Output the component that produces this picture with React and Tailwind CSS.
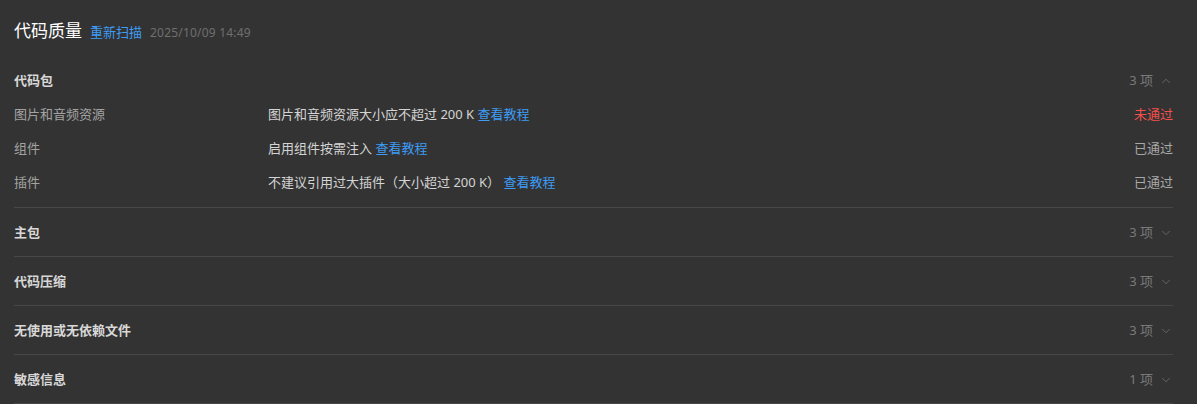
import React from "react";
import { ChevronUp, ChevronDown } from "lucide-react";

const font = { fontFamily: '"Noto Sans", "Noto Sans CJK SC", sans-serif' };

const rows = [
  { name: "图片和音频资源", desc: "图片和音频资源大小应不超过 200 K", status: "未通过", fail: true },
  { name: "组件", desc: "启用组件按需注入", status: "已通过" },
  { name: "插件", desc: "不建议引用过大插件（大小超过 200 K）", status: "已通过" },
];

const sections = [
  { title: "主包", count: "3 项" },
  { title: "代码压缩", count: "3 项" },
  { title: "无使用或无依赖文件", count: "3 项" },
  { title: "敏感信息", count: "1 项" },
];

function Count({ count, open }) {
  return (
    <div className="flex items-center gap-[6px] text-[13px] text-[#7a7a7a]">
      <span>{count}</span>
      {open ? (
        <ChevronUp size={14} strokeWidth={1.2} className="text-[#7a7a7a]" />
      ) : (
        <ChevronDown size={14} strokeWidth={1.2} className="text-[#7a7a7a]" />
      )}
    </div>
  );
}

export default function App() {
  return (
    <div className="w-[1197px] h-[404px] overflow-hidden bg-[#333333] pl-[14px] pr-[24px]" style={font}>
      <div className="h-[57px] pt-[19px] flex items-start">
        <div className="flex items-baseline">
          <span className="text-[17px] leading-[24px] text-white">代码质量</span>
          <span className="ml-[8px] text-[13px] text-[#3d9cf5]">重新扫描</span>
          <span className="ml-[8px] text-[12px] tracking-[0.2px] text-[#6f6f6f]">2025/10/09 14:49</span>
        </div>
      </div>

      <div className="border-b border-[#474747] pb-[1px]">
        <div className="h-[47px] flex items-center justify-between">
          <span className="text-[13px] font-bold text-[#d8d8d8]">代码包</span>
          <Count count="3 项" open />
        </div>
        {rows.map((r) => (
          <div key={r.name} className="h-[34px] flex items-start text-[13px] leading-[20px]">
            <div className="w-[254px] text-[#a3a3a3]">{r.name}</div>
            <div className="flex-1 text-[#d4d4d4]">
              {r.desc} <span className="text-[#3d9cf5]">查看教程</span>
            </div>
            <div className={r.fail ? "text-[#f4504c]" : "text-[#a8a8a8]"}>{r.status}</div>
          </div>
        ))}
      </div>

      {sections.map((s) => (
        <div key={s.title} className="h-[49px] pt-[2px] border-b border-[#474747] flex items-center justify-between">
          <span className="text-[13px] font-bold text-[#d8d8d8]">{s.title}</span>
          <Count count={s.count} />
        </div>
      ))}
    </div>
  );
}
